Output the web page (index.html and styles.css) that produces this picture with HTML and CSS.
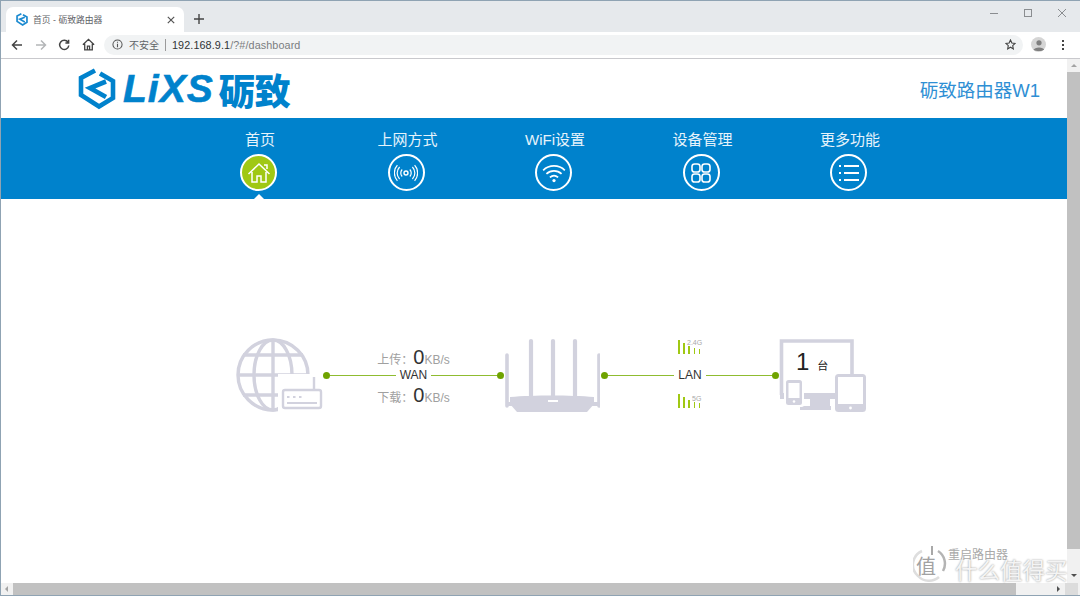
FILE: index.html
```html
<!DOCTYPE html>
<html lang="zh-CN">

<head>
    <meta charset="UTF-8">
    <title>首页 - 砺致路由器</title>
    <link rel="stylesheet" href="styles.css">
</head>

<body>
    <div class="window">
        <!-- tab strip -->
        <div class="tabstrip">
            <div class="tab">
                <svg class="favicon" viewBox="0 0 38 42" width="12" height="13">
                    <path d="M17 2.500 L3 10 V27 L21 38.500 L35 30 V13 L22 5.500 M28 13.500 L12 20 L28 29" fill="none" stroke="#1b8ad0" stroke-width="5.500" />
                </svg>
                <span class="tab-title">首页 - 砺致路由器</span>
                <svg class="tab-close" viewBox="0 0 10 10" width="8" height="8">
                    <path d="M1 1 L9 9 M9 1 L1 9" stroke="#555" stroke-width="1.5" />
                </svg>
            </div>
            <svg class="new-tab" viewBox="0 0 10 10" width="10" height="10">
                <path d="M5 0 V10 M0 5 H10" stroke="#444" stroke-width="1.4" />
            </svg>
            <div class="win-controls">
                <svg viewBox="0 0 10 10" width="10" height="10"><path d="M1 5.500 H9" stroke="#8a8d90" stroke-width="1" /></svg>
                <svg viewBox="0 0 10 10" width="10" height="10"><rect x="1.500" y="1.500" width="7" height="7" fill="none" stroke="#8a8d90" stroke-width="1" /></svg>
                <svg viewBox="0 0 10 10" width="10" height="10"><path d="M1 1 L9 9 M9 1 L1 9" stroke="#8a8d90" stroke-width="1" /></svg>
            </div>
        </div>

        <!-- toolbar -->
        <div class="toolbar">
            <svg class="tool" viewBox="0 0 12 12" width="12" height="12"><path d="M11 6 H1.500 M6 1.500 L1.500 6 L6 10.500" fill="none" stroke="#444" stroke-width="1.500" /></svg>
            <svg class="tool" viewBox="0 0 12 12" width="12" height="12"><path d="M1 6 H10.500 M6 1.500 L10.500 6 L6 10.500" fill="none" stroke="#b4b6b8" stroke-width="1.500" /></svg>
            <svg class="tool tool-reload" viewBox="0 0 12 12" width="12" height="12"><path d="M10 3.200 A4.600 4.600 0 1 0 10.800 6.500 M10.600 0.800 V4 H7.400" fill="none" stroke="#444" stroke-width="1.500" /></svg>
            <svg class="tool" viewBox="0 0 12 12" width="13" height="13"><path d="M0.800 6.200 L6 1.200 L11.200 6.200 M2.500 5.200 V11 H9.500 V5.200 M5 11 V7.500 H7 V11" fill="none" stroke="#444" stroke-width="1.200" /></svg>
            <div class="omnibox">
                <svg class="info" viewBox="0 0 12 12" width="11" height="11">
                    <circle cx="6" cy="6" r="5" fill="none" stroke="#555" stroke-width="1.100" />
                    <path d="M6 5.200 V9 M6 3 V4.200" stroke="#555" stroke-width="1.200" />
                </svg>
                <span class="insecure">不安全</span>
                <span class="sep"></span>
                <span class="url"><b>192.168.9.1</b>/?#/dashboard</span>
                <svg class="star" viewBox="0 0 12 12" width="11" height="11">
                    <path d="M6 1 L7.500 4.400 L11 4.800 L8.400 7.200 L9.100 10.800 L6 9 L2.900 10.800 L3.600 7.200 L1 4.800 L4.500 4.400 Z" fill="none" stroke="#444" stroke-width="1.200" />
                </svg>
            </div>
            <div class="avatar">
                <svg viewBox="0 0 14 14" width="14" height="14">
                    <circle cx="7" cy="4.800" r="2.600" fill="#7f7f7f" />
                    <path d="M1.500 12 C2.500 8.600 11.500 8.600 12.500 12 C10 13.400 4 13.400 1.500 12 Z" fill="#7f7f7f" />
                </svg>
            </div>
            <div class="dots"><i></i><i></i><i></i></div>
        </div>

        <div class="viewport">
            <div class="viewport-row">
                <div class="page">
                    <header class="page-head">
                        <div class="logo">
                            <svg viewBox="0 0 38 42" width="38" height="42">
                                <path d="M17 2.500 L3 10 V27 L21 38.500 L35 30 V13 L22 5.500 M28 13.500 L12 20 L28 29" fill="none" stroke="#0082cc" stroke-width="4.600" />
                            </svg>
                            <span class="logo-text">LiXS</span>
                            <span class="logo-cn">砺致</span>
                        </div>
                        <div class="model">砺致路由器W1</div>
                    </header>

                    <nav class="nav">
                        <a class="nav-item active">
                            <span class="nav-label">首页</span>
                            <span class="nav-icon">
                                <svg viewBox="0 0 24 24" width="24" height="24">
                                    <path d="M1.500 13 L12 3 L22.500 13 M5 11 V21 H10 V15 H14 V21 H19 V11 M17 4 H20 V8" fill="none" stroke="#fff" stroke-width="1.500" />
                                </svg>
                            </span>
                        </a>
                        <a class="nav-item">
                            <span class="nav-label">上网方式</span>
                            <span class="nav-icon">
                                <svg viewBox="0 0 24 24" width="24" height="24">
                                    <circle cx="12" cy="12" r="2" fill="none" stroke="#fff" stroke-width="1.400" />
                                    <path d="M8.200 8.500 A5 5 0 0 0 8.200 15.500 M15.800 8.500 A5 5 0 0 1 15.800 15.500 M5.600 6 A8.600 8.600 0 0 0 5.600 18 M18.400 6 A8.600 8.600 0 0 1 18.400 18 M3.400 4.200 A11.600 11.600 0 0 0 3.400 19.800 M20.600 4.200 A11.600 11.600 0 0 1 20.600 19.800" fill="none" stroke="#fff" stroke-width="1.200" />
                                </svg>
                            </span>
                        </a>
                        <a class="nav-item">
                            <span class="nav-label">WiFi设置</span>
                            <span class="nav-icon">
                                <svg viewBox="0 0 24 24" width="26" height="26">
                                    <path d="M2 9.500 C7.500 4.200 16.500 4.200 22 9.500 M5 12.800 C9 9 15 9 19 12.800 M8.200 16 C10.500 14 13.500 14 15.800 16" fill="none" stroke="#fff" stroke-width="1.600" />
                                    <circle cx="12" cy="19" r="1.500" fill="#fff" />
                                </svg>
                            </span>
                        </a>
                        <a class="nav-item">
                            <span class="nav-label">设备管理</span>
                            <span class="nav-icon">
                                <svg viewBox="0 0 24 24" width="24" height="24">
                                    <g fill="none" stroke="#fff" stroke-width="1.600">
                                        <rect x="3" y="3" width="8" height="8" rx="2.600" />
                                        <rect x="13" y="3" width="8" height="8" rx="2.600" />
                                        <rect x="3" y="13" width="8" height="8" rx="2.600" />
                                        <rect x="13" y="13" width="8" height="8" rx="2.600" />
                                    </g>
                                </svg>
                            </span>
                        </a>
                        <a class="nav-item">
                            <span class="nav-label">更多功能</span>
                            <span class="nav-icon">
                                <svg viewBox="0 0 24 24" width="24" height="24">
                                    <path d="M7 5 H22 M7 12 H22 M7 19 H22 M2 5 H4 M2 12 H4 M2 19 H4" stroke="#fff" stroke-width="1.800" />
                                </svg>
                            </span>
                        </a>
                    </nav>

                    <main class="diagram">
                        <svg class="node" viewBox="0 0 87 75" width="87" height="75">
                            <g fill="none" stroke="#d2d2de" stroke-width="3.400">
                                <circle cx="37" cy="37" r="35" />
                                <ellipse cx="37" cy="37" rx="19" ry="35" />
                                <path d="M37 2 V72 M2 37 H72 M7 17 H67 M7 57 H67" />
                            </g>
                            <rect x="42" y="36" width="45" height="39" fill="#fff" />
                            <rect x="47" y="52" width="38" height="18" rx="2" fill="#fff" stroke="#d2d2de" stroke-width="2.400" />
                            <path d="M78 52 V39" stroke="#d2d2de" stroke-width="2.400" />
                            <path d="M51 59 H53.500 M57 59 H59.500 M63 59 H65.500 M51 65 H81" stroke="#d2d2de" stroke-width="1.800" />
                        </svg>

                        <div class="link link-wan">
                            <div class="rate"><span class="rate-name">上传&#xFF1A;</span><span class="rate-num">0</span><span class="rate-unit">KB/s</span></div>
                            <div class="wire"><i class="dot"></i><i class="line"></i><span class="wire-label">WAN</span><i class="line"></i><i class="dot"></i></div>
                            <div class="rate"><span class="rate-name">下载&#xFF1A;</span><span class="rate-num">0</span><span class="rate-unit">KB/s</span></div>
                        </div>

                        <svg class="node" viewBox="0 0 96 75" width="96" height="75">
                            <g stroke="#d2d2de" stroke-linecap="round" fill="none">
                                <path d="M27 3 V60 M49 3 V60 M71 3 V60" stroke-width="4.200" />
                                <path d="M3 17 V68 M95 17 V68" stroke-width="3.600" />
                            </g>
                            <path d="M6 59 C30 57 66 57 90 59 V66 L83 74 H13 L6 66 Z" fill="#d2d2de" />
                            <path d="M3 64 H8 V68 H3 Z M88 64 H95 V68 H88 Z" fill="#d2d2de" />
                            <rect x="44" y="62" width="10" height="2" fill="#fff" />
                        </svg>

                        <div class="link link-lan">
                            <div class="signal signal-up">
                                <span class="bars"><i class="h14"></i><i class="h11"></i><i class="h8"></i><i class="h6"></i><i class="h5"></i></span>
                                <span class="band band-24">2.4G</span>
                            </div>
                            <div class="wire"><i class="dot"></i><i class="line"></i><span class="wire-label">LAN</span><i class="line"></i><i class="dot"></i></div>
                            <div class="signal signal-down">
                                <span class="bars"><i class="h14"></i><i class="h11"></i><i class="h8"></i><i class="h6"></i><i class="h5"></i></span>
                                <span class="band band-5">5G</span>
                            </div>
                        </div>

                        <div class="devices">
                            <svg viewBox="0 0 88 75" width="88" height="75">
                                <path d="M2.500 57 V3 H73 V36" fill="none" stroke="#d2d2de" stroke-width="3.600" />
                                <path d="M1 55 H57 V61 H51 V68 H52 V72 H21 V68 H31 V61 H1 Z" fill="#d2d2de" />
                                <rect x="5" y="40" width="20" height="29" rx="2.500" fill="#fff" />
                                <rect x="7" y="42" width="16" height="25" rx="2.500" fill="#d2d2de" />
                                <rect x="9.500" y="45" width="11" height="15" fill="#fff" />
                                <circle cx="15" cy="63.500" r="1.300" fill="#fff" />
                                <rect x="56" y="36" width="31" height="38" rx="3.500" fill="#d2d2de" />
                                <rect x="59" y="39" width="25" height="27" fill="#fff" />
                                <circle cx="71.500" cy="70" r="1.400" fill="#fff" />
                            </svg>
                            <div class="device-count"><span class="count-num">1</span><span class="count-unit">台</span></div>
                        </div>
                    </main>

                    <div class="watermark">
                        <svg viewBox="0 0 34 40" width="34" height="40">
                            <path d="M9 7 A15 15 0 0 0 5 32 A15 15 0 0 0 26 33" fill="none" stroke="#dedede" stroke-width="2.500" />
                            <path d="M25 7 A15 15 0 0 1 30 27" fill="none" stroke="#b4b4b4" stroke-width="2.500" />
                            <path d="M19 2 V11" stroke="#a8a8a8" stroke-width="2" />
                        </svg>
                        <span class="wm-circle">值</span>
                        <span class="wm-restart">重启路由器</span>
                        <span class="wm-site">什么值得买</span>
                    </div>
                </div>

                <div class="vscroll">
                    <i class="arrow-up"></i>
                    <div class="vthumb"></div>
                    <i class="arrow-down"></i>
                </div>
            </div>

            <div class="hscroll">
                <i class="arrow-left"></i>
                <div class="hthumb"></div>
                <i class="arrow-right"></i>
                <div class="corner"></div>
            </div>
        </div>
    </div>
</body>

</html>
```

FILE: styles.css
```css
* {
    box-sizing: border-box;
}

html,
body {
    margin: 0;
    height: 100%;
    overflow: hidden;
}

body {
    font-family: 'Liberation Sans', 'Noto Sans CJK SC', sans-serif;
    background-color: #ffffff;
}

.window {
    height: 596px;
    display: flex;
    flex-direction: column;
    border: 1px solid #8fa3b3;
    border-right: none;
}

/* browser chrome */
.tabstrip {
    height: 31px;
    flex: none;
    display: flex;
    align-items: flex-end;
    padding-left: 5px;
    background-color: #e6e9ec;
}

.tab {
    width: 178px;
    height: 25px;
    display: flex;
    align-items: center;
    padding: 0 9px 0 10px;
    background-color: #ffffff;
    border-radius: 7px 7px 0 0;
}

.favicon {
    flex: none;
}

.tab-title {
    margin-left: 5px;
    font-size: 8.8px;
    color: #5f6368;
    flex: 1;
}

.new-tab {
    margin: 0 0 8px 10px;
}

.win-controls {
    margin-left: auto;
    height: 23px;
    align-self: flex-start;
    display: flex;
    align-items: center;
    gap: 24px;
    padding-right: 13px;
}

.toolbar {
    height: 27px;
    flex: none;
    display: flex;
    align-items: center;
    padding: 0 0 1px 10px;
    background-color: #ffffff;
    border-bottom: 1px solid #c9c9cd;
}

.tool {
    margin-right: 12px;
    flex: none;
}

.tool-reload {
    margin-left: -1px;
}

.omnibox {
    width: 919px;
    height: 20px;
    margin-left: -3px;
    display: flex;
    align-items: center;
    padding: 0 7px 0 8px;
    background-color: #f1f3f4;
    border-radius: 10px;
}

.insecure {
    margin-left: 6px;
    font-size: 10px;
    color: #5f6368;
}

.sep {
    width: 1px;
    height: 12px;
    margin: 0 6px;
    background-color: #9a9a9a;
}

.url {
    font-size: 10.8px;
    color: #7a7d80;
    letter-spacing: 0.1px;
}

.url b {
    font-weight: normal;
    color: #303336;
}

.star {
    margin-left: auto;
}

.avatar {
    width: 15px;
    height: 15px;
    margin-left: 8px;
    display: flex;
    align-items: center;
    justify-content: center;
    border-radius: 50%;
    background-color: #d5d5d5;
    overflow: hidden;
}

.dots {
    margin-left: 16px;
    display: flex;
    flex-direction: column;
    gap: 2px;
}

.dots i {
    width: 2px;
    height: 2px;
    background-color: #444;
}

/* viewport */
.viewport {
    flex: 1;
    min-height: 0;
    display: flex;
    flex-direction: column;
}

.viewport-row {
    flex: 1;
    min-height: 0;
    display: flex;
}

.page {
    flex: 1;
    position: relative;
}

.page-head {
    height: 59px;
    display: flex;
    align-items: center;
    padding: 0 27px 0 77px;
}

.logo {
    display: flex;
    align-items: center;
    color: #0082cc;
}

.logo-text {
    margin-left: 7px;
    font-family: 'Liberation Sans', sans-serif;
    font-size: 39px;
    line-height: 1;
    font-weight: bold;
    font-style: italic;
    letter-spacing: 1px;
    -webkit-text-stroke: 0.6px #0082cc;
}

.logo-cn {
    margin-left: 5px;
    font-family: 'Noto Sans CJK SC', sans-serif;
    font-size: 36px;
    line-height: 1;
    font-weight: 900;
}

.model {
    margin-left: auto;
    font-size: 18.5px;
    color: #2f8fd4;
}

.nav {
    height: 81px;
    display: flex;
    justify-content: center;
    padding: 12px 0 0 42px;
    background-color: #0082cc;
}

.nav-item {
    width: 147.5px;
    display: flex;
    flex-direction: column;
    align-items: center;
    position: relative;
    color: #ffffff;
}

.nav-label {
    height: 20px;
    font-size: 15px;
    line-height: 20px;
    color: #e6f3fb;
}

.nav-icon {
    width: 37px;
    height: 37px;
    margin: 4px 3px 0 0;
    display: flex;
    align-items: center;
    justify-content: center;
    border: 2px solid #ffffff;
    border-radius: 50%;
}

.nav-item.active .nav-icon {
    background-color: #a0c814;
}

.nav-item.active::after {
    content: "";
    position: absolute;
    left: 50%;
    bottom: 0;
    margin-left: -6px;
    border: 5px solid transparent;
    border-top: none;
    border-bottom-color: #ffffff;
}

/* network diagram */
.diagram {
    display: flex;
    align-items: center;
    padding: 138px 0 0 235px;
}

.node,
.devices {
    flex: none;
}

.link {
    display: flex;
    flex-direction: column;
    align-items: center;
}

.link-wan {
    width: 181px;
}

.link-lan {
    width: 178px;
    margin-left: 1px;
}

.wire {
    width: 100%;
    height: 16px;
    display: flex;
    align-items: center;
}

.dot {
    width: 7px;
    height: 7px;
    flex: none;
    border-radius: 50%;
    background-color: #6fa300;
}

.line {
    flex: 1;
    height: 1px;
    background-color: #8fbc30;
}

.wire-label {
    padding: 0 4px;
    font-size: 12px;
    color: #333333;
}

.rate {
    height: 22px;
    padding-top: 2px;
    display: flex;
    align-items: baseline;
    justify-content: center;
    color: #a0a0a0;
    font-size: 12px;
}

.rate-num {
    font-size: 20px;
    line-height: 20px;
    color: #333333;
}

.signal {
    height: 30px;
    width: 24px;
    display: flex;
    position: relative;
}

.signal-up {
    align-items: flex-end;
    padding-bottom: 13px;
}

.signal-down {
    align-items: flex-start;
    padding-top: 11px;
}

.bars {
    height: 14px;
    display: flex;
    align-items: flex-end;
    gap: 3.5px;
}

.bars i {
    width: 1.7px;
    background-color: #a0c814;
}

.h14 {
    height: 14px;
}

.h11 {
    height: 11px;
}

.h8 {
    height: 8px;
}

.h6 {
    height: 6px;
}

.h5 {
    height: 5px;
}

.band {
    position: absolute;
    font-size: 7px;
    line-height: 8px;
    color: #a8a8a8;
    white-space: nowrap;
}

.band-24 {
    left: 9px;
    top: 2px;
}

.band-5 {
    left: 14px;
    top: 12px;
}

.devices {
    position: relative;
    height: 75px;
}

.device-count {
    position: absolute;
    left: 17px;
    top: 10px;
    color: #222222;
    display: flex;
    align-items: baseline;
}

.count-num {
    font-size: 24px;
}

.count-unit {
    margin-left: 8px;
    font-size: 11px;
}

/* watermark sits over the page */
.watermark {
    position: absolute;
    right: 0;
    bottom: 0;
    width: 166px;
    height: 52px;
}

.watermark svg {
    position: absolute;
    left: 12px;
    top: 13px;
}

.wm-circle {
    position: absolute;
    left: 15px;
    top: 26px;
    font-size: 20px;
    line-height: 20px;
    color: #a2a2a2;
}

.wm-restart {
    position: absolute;
    left: 47px;
    top: 18px;
    font-size: 12px;
    line-height: 12px;
    color: #a9a9a9;
}

.wm-site {
    position: absolute;
    left: 54px;
    top: 30px;
    font-size: 22.5px;
    line-height: 22px;
    white-space: nowrap;
    color: #f4f4f4;
    text-shadow: 0 0 2px rgba(0, 0, 0, 0.45);
}

/* scrollbars */
.vscroll {
    width: 13px;
    flex: none;
    display: flex;
    flex-direction: column;
    align-items: center;
    background-color: #f1f1f1;
}

.vthumb {
    width: 100%;
    flex: 1;
    margin: 5px 0 25px;
    background-color: #c1c1c1;
}

.arrow-up,
.arrow-down,
.arrow-left,
.arrow-right {
    width: 0;
    height: 0;
    flex: none;
    border: 3px solid transparent;
}

.arrow-up {
    margin-top: 5px;
    border-top: none;
    border-bottom-color: #a3a3a3;
}

.arrow-down {
    margin-bottom: 6px;
    border-bottom: none;
    border-top-color: #505050;
}

.hscroll {
    height: 12px;
    flex: none;
    display: flex;
    align-items: center;
    padding-left: 4px;
    background-color: #f1f1f1;
}

.arrow-left {
    border-left: none;
    border-right-color: #a3a3a3;
}

.arrow-right {
    margin-right: 5px;
    border-right: none;
    border-left-color: #505050;
}

.hthumb {
    width: 1003px;
    height: 100%;
    margin: 0 41px 0 5px;
    background-color: #c1c1c1;
}

.corner {
    width: 13px;
    height: 100%;
    background-color: #dcdcdc;
}
```
